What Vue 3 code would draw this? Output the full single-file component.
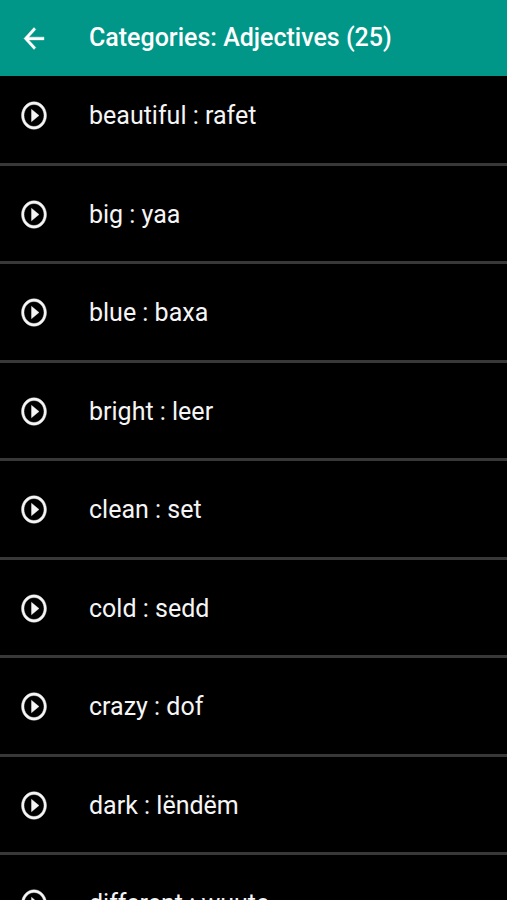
<script setup>
const words = [
  { en: 'beautiful', wo: 'rafet' },
  { en: 'big', wo: 'yaa' },
  { en: 'blue', wo: 'baxa' },
  { en: 'bright', wo: 'leer' },
  { en: 'clean', wo: 'set' },
  { en: 'cold', wo: 'sedd' },
  { en: 'crazy', wo: 'dof' },
  { en: 'dark', wo: 'lëndëm' },
  { en: 'different', wo: 'wuute' },
]
</script>

<template>
  <div class="screen">
    <header class="bar">
      <button class="icon-button" type="button" aria-label="Back">
        <svg class="icon" viewBox="0 0 24 24" preserveAspectRatio="none" aria-hidden="true">
          <path d="M20 11H7.83l5.59-5.59L12 4l-8 8 8 8 1.41-1.41L7.83 13H20z" />
        </svg>
      </button>
      <h1 class="title">Categories: Adjectives (25)</h1>
    </header>
    <ul class="list">
      <li v-for="word in words" :key="word.en" class="row">
        <button class="icon-button" type="button" :aria-label="word.en">
          <svg class="icon" viewBox="0 0 24 24" preserveAspectRatio="none" aria-hidden="true">
            <path d="M10 16.5l6-4.5-6-4.5zM12 2C6.48 2 2 6.48 2 12s4.48 10 10 10 10-4.48 10-10S17.52 2 12 2zm0 18c-4.41 0-8-3.59-8-8s3.59-8 8-8 8 3.59 8 8-3.59 8-8 8z" />
          </svg>
        </button>
        <span class="word">{{ word.en }} : {{ word.wo }}</span>
      </li>
    </ul>
  </div>
</template>

<style>
body {
  background: #000;
}
</style>

<style scoped>
.screen {
  display: flex;
  flex-direction: column;
  height: 100vh;
  overflow: hidden;
  background: #000;
  color: #f5f5f5;
  font-family: Roboto, "Noto Sans", sans-serif;
}

.bar {
  display: flex;
  flex: none;
  align-items: center;
  box-sizing: border-box;
  min-height: 76px;
  padding: 0 19px;
  gap: 40px;
  background: #009788;
  color: #fff;
}

.icon-button {
  display: flex;
  flex: none;
  margin: 0;
  padding: 0;
  border: 0;
  background: none;
  color: inherit;
  cursor: pointer;
}

.icon {
  display: block;
  width: 30px;
  height: 33px;
  fill: currentColor;
  stroke: currentColor;
  stroke-width: 0.3;
}

.title {
  margin: 0;
  font-size: 25px;
  font-weight: 500;
  line-height: 32px;
  white-space: nowrap;
}

.list {
  flex: 1;
  min-height: 0;
  margin: 0;
  padding: 0;
  overflow-y: auto;
  scrollbar-width: none;
  list-style: none;
}

.row {
  display: flex;
  align-items: center;
  gap: 40px;
  padding: 32px 19px 31px;
  border-bottom: 3px solid #383838;
}

.row:nth-child(even) {
  padding-bottom: 30px;
}

.row:first-child {
  padding-top: 23px;
}

.word {
  font-size: 25px;
  line-height: 32px;
}
</style>
